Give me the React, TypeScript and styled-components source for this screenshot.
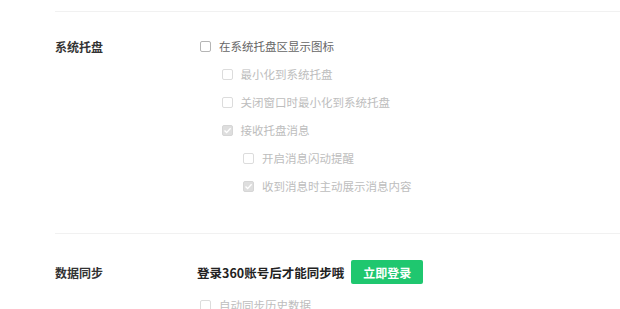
import React from "react";
import styled, { createGlobalStyle } from "styled-components";

const GlobalStyle = createGlobalStyle`
	body {
		margin: 0;
		background: #fff;
		font-family: "Noto Sans CJK SC", "Noto Sans", sans-serif;
	}
`;

const Page = styled.div`
	width: 620px;
	height: 309px;
	overflow: hidden;
	padding-top: 11px;
	box-sizing: border-box;
`;

const Section = styled.section<{ $top: number; $bottom: number }>`
	margin-left: 55px;
	border-top: 1px solid #f1f1f1;
	display: grid;
	grid-template-columns: 145px 1fr;
	padding-top: ${(p) => p.$top}px;
	padding-bottom: ${(p) => p.$bottom}px;
`;

const Label = styled.div<{ $h: number }>`
	height: ${(p) => p.$h}px;
	display: flex;
	align-items: center;
	font-size: 12px;
	font-weight: 700;
	color: #333;
`;

const Options = styled.div`
	display: flex;
	flex-direction: column;
`;

const Row = styled.label<{ $level: number; $disabled?: boolean }>`
	height: 28px;
	display: flex;
	align-items: center;
	gap: 8px;
	padding-left: ${(p) => p.$level * 21.5}px;
	font-size: 11.5px;
	color: ${(p) => (p.$disabled ? "#bdbdbd" : "#666")};
`;

const Box = styled.span<{ $checked?: boolean; $disabled?: boolean }>`
	width: 11px;
	height: 11px;
	box-sizing: border-box;
	border: 1px solid ${(p) => (p.$checked ? "#d6d6d6" : p.$disabled ? "#dcdcdc" : "#b5b5b5")};
	border-radius: 2px;
	background: ${(p) => (p.$checked ? "#dedede" : "#fff")};
	display: flex;
	align-items: center;
	justify-content: center;
	flex-shrink: 0;
`;

const LoginRow = styled.div`
	height: 24px;
	display: flex;
	align-items: center;
	gap: 7px;
	margin-bottom: 7px;
`;

const LoginText = styled.span`
	font-size: 12.5px;
	font-weight: 700;
	color: #222;
	margin-left: -3px;
`;

const LoginButton = styled.button`
	width: 72px;
	height: 24px;
	border: none;
	border-radius: 2px;
	background: #1fc76f;
	color: #fff;
	font-family: inherit;
	font-size: 12px;
	font-weight: 700;
	cursor: pointer;
	padding: 0;
`;

type Opt = { text: string; level: number; checked?: boolean; disabled?: boolean };

const trayOptions: Opt[] = [
	{ text: "在系统托盘区显示图标", level: 0 },
	{ text: "最小化到系统托盘", level: 1, disabled: true },
	{ text: "关闭窗口时最小化到系统托盘", level: 1, disabled: true },
	{ text: "接收托盘消息", level: 1, checked: true, disabled: true },
	{ text: "开启消息闪动提醒", level: 2, disabled: true },
	{ text: "收到消息时主动展示消息内容", level: 2, checked: true, disabled: true },
];

function Check({ checked, disabled }: { checked?: boolean; disabled?: boolean }) {
	return (
		<Box $checked={checked} $disabled={disabled}>
			{checked ? (
				<svg width="9" height="9" viewBox="0 0 9 9">
					<path d="M1.5 4.6 L3.6 6.6 L7.6 2.2" fill="none" stroke="#fff" strokeWidth="1.4" />
				</svg>
			) : null}
		</Box>
	);
}

export default function App() {
	return (
		<Page>
			<GlobalStyle />
			<Section $top={20} $bottom={33}>
				<Label $h={28}>系统托盘</Label>
				<Options>
					{trayOptions.map((o) => (
						<Row key={o.text} $level={o.level} $disabled={o.disabled}>
							<Check checked={o.checked} disabled={o.disabled} />
							{o.text}
						</Row>
					))}
				</Options>
			</Section>
			<Section $top={26} $bottom={0}>
				<Label $h={24}>数据同步</Label>
				<Options>
					<LoginRow>
						<LoginText>登录360账号后才能同步哦</LoginText>
						<LoginButton>立即登录</LoginButton>
					</LoginRow>
					<Row $level={0} $disabled>
						<Check disabled />
						自动同步历史数据
					</Row>
				</Options>
			</Section>
		</Page>
	);
}
